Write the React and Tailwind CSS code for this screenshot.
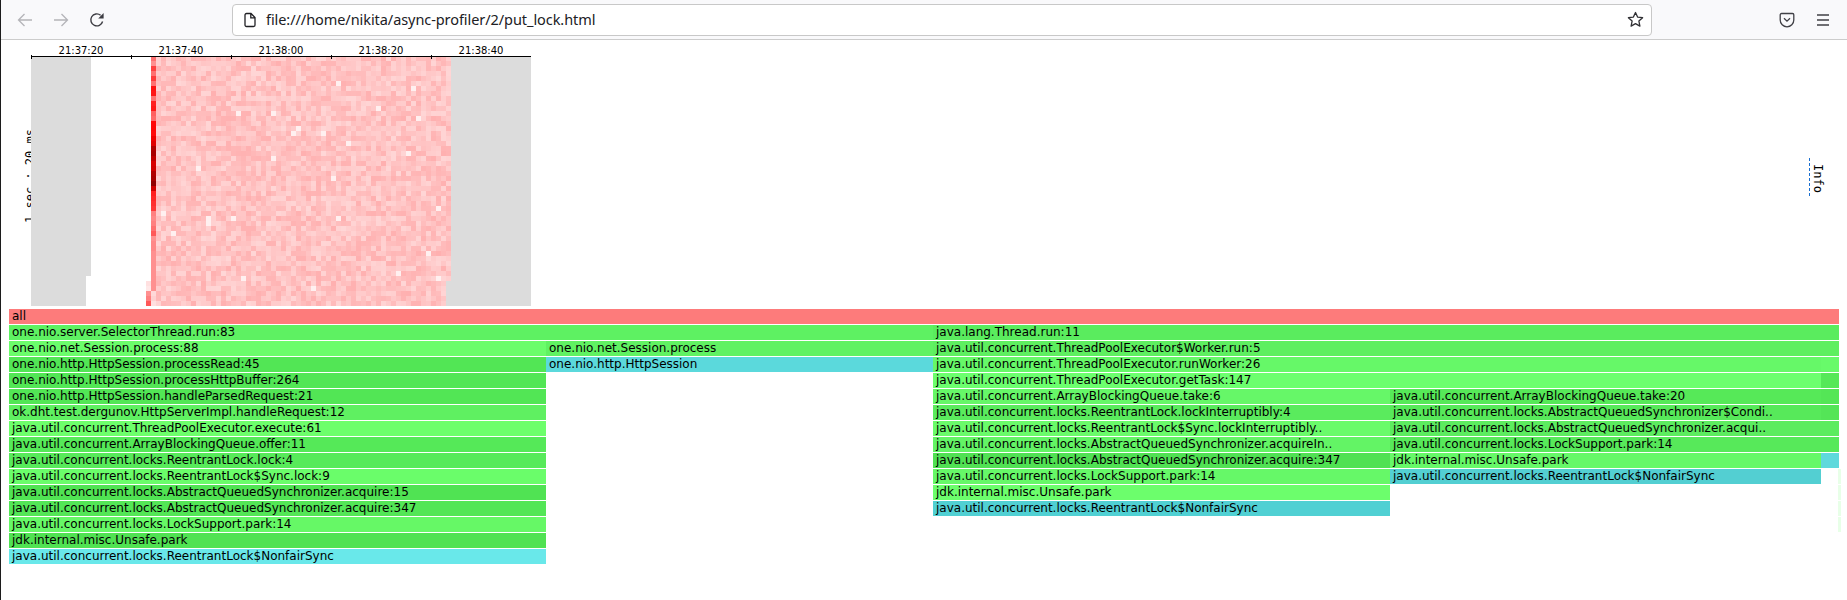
import React from 'react';

const mono = "font-['DejaVu_Sans_Mono',monospace]";

// first column of the heatmap, top to bottom
const hotColumn = [
  '#ff7070', '#ff9090', '#ff4040', '#ff7070', '#ff3a3a', '#ff7070', '#ff1010', '#ff1515', '#ff7070', '#ff2020',
  '#ff1818', '#ff6060', '#ff6a6a', '#ff0808', '#ff0606', '#ff0a0a', '#f00000', '#e00000', '#b00000', '#a80000',
  '#c00000', '#d80000', '#d00000', '#b00000', '#a80000', '#900000', '#d00000', '#ff2020', '#ff2828', '#ff3030',
  '#ff3838', '#ff8080', '#ff8888', '#ff8080', '#ff7070', '#ff5858', '#ff9090', '#ff8888', '#ff8888', '#ff9090',
  '#ff9090', '#ff9090', '#ff9090', '#ff9090', '#ff9090', '#ff9090', '#ff9090', '#ffd8d8', '#ffd0d0', '#ffe0e0',
];
const leadColumn = { 45: '#ffe0e0', 46: '#ffe8e8', 47: '#ff9090', 48: '#ff8080', 49: '#ff5858' };

function buildCells() {
  let seed = 4711;
  const next = () => {
    seed = (seed * 1103515245 + 12345) % 2147483648;
    return seed / 2147483648;
  };
  const cells = [];
  for (let r = 0; r < 50; r++) {
    for (let c = 0; c < 100; c++) {
      let fill = null;
      if (c < 11) fill = '#dcdcdc';
      else if (c === 11) fill = r < 44 ? '#dcdcdc' : null;
      else if (c === 23) fill = leadColumn[r] || null;
      else if (c === 24) fill = hotColumn[r];
      else if (c > 83 || (c === 83 && r >= 45)) fill = '#dcdcdc';
      else if (c > 24) {
        const n = next();
        let v = Math.round(176 + n * 38);
        if (n > 0.995) v = 240;
        fill = `rgb(255,${v},${v})`;
      }
      if (fill) cells.push(<rect key={r + '-' + c} x={c * 5} y={1 + r * 5} width="5" height="5" fill={fill} />);
    }
  }
  return cells;
}

const labels = ['21:37:20', '21:37:40', '21:38:00', '21:38:20', '21:38:40'];

const rows = [
  [['w-[1830px] bg-[#fd7b7b]', 'all']],
  [['w-[924px] bg-[#5ef162]', 'one.nio.server.SelectorThread.run:83'], ['w-[906px] bg-[#5aec5e]', 'java.lang.Thread.run:11']],
  [['w-[537px] bg-[#6bfd6b]', 'one.nio.net.Session.process:88'], ['w-[387px] bg-[#60f262]', 'one.nio.net.Session.process'], ['w-[906px] bg-[#5eef60]', 'java.util.concurrent.ThreadPoolExecutor$Worker.run:5']],
  [['w-[537px] bg-[#52e655]', 'one.nio.http.HttpSession.processRead:45'], ['w-[387px] bg-[#5bd9dc]', 'one.nio.http.HttpSession'], ['w-[888px] bg-[#66f868]', 'java.util.concurrent.ThreadPoolExecutor.runWorker:26'], ['w-[18px] bg-[#68fa6a]', '']],
  [['w-[537px] bg-[#52e655]', 'one.nio.http.HttpSession.processHttpBuffer:264'], ['w-[387px]', ''], ['w-[888px] bg-[#6cff6e]', 'java.util.concurrent.ThreadPoolExecutor.getTask:147'], ['w-[18px] bg-[#56e858]', '']],
  [['w-[537px] bg-[#52e655]', 'one.nio.http.HttpSession.handleParsedRequest:21'], ['w-[387px]', ''], ['w-[457px] bg-[#66f768]', 'java.util.concurrent.ArrayBlockingQueue.take:6'], ['w-[431px] bg-[#56e958]', 'java.util.concurrent.ArrayBlockingQueue.take:20'], ['w-[18px] bg-[#54e656]', '']],
  [['w-[537px] bg-[#5ff061]', 'ok.dht.test.dergunov.HttpServerImpl.handleRequest:12'], ['w-[387px]', ''], ['w-[457px] bg-[#5aeb5d]', 'java.util.concurrent.locks.ReentrantLock.lockInterruptibly:4'], ['w-[431px] bg-[#57e95a]', 'java.util.concurrent.locks.AbstractQueuedSynchronizer$Condi..'], ['w-[18px] bg-[#54e557]', '']],
  [['w-[537px] bg-[#6dff6b]', 'java.util.concurrent.ThreadPoolExecutor.execute:61'], ['w-[387px]', ''], ['w-[457px] bg-[#6afb6a]', 'java.util.concurrent.locks.ReentrantLock$Sync.lockInterruptibly..'], ['w-[449px] bg-[#5cec5f]', 'java.util.concurrent.locks.AbstractQueuedSynchronizer.acqui..']],
  [['w-[537px] bg-[#55e958]', 'java.util.concurrent.ArrayBlockingQueue.offer:11'], ['w-[387px]', ''], ['w-[457px] bg-[#63f465]', 'java.util.concurrent.locks.AbstractQueuedSynchronizer.acquireIn..'], ['w-[449px] bg-[#57e95a]', 'java.util.concurrent.locks.LockSupport.park:14']],
  [['w-[537px] bg-[#57ea5a]', 'java.util.concurrent.locks.ReentrantLock.lock:4'], ['w-[387px]', ''], ['w-[457px] bg-[#50e153]', 'java.util.concurrent.locks.AbstractQueuedSynchronizer.acquire:347'], ['w-[431px] bg-[#66f868]', 'jdk.internal.misc.Unsafe.park'], ['w-[18px] bg-[#5fd9dc]', '']],
  [['w-[537px] bg-[#6afd6a]', 'java.util.concurrent.locks.ReentrantLock$Sync.lock:9'], ['w-[387px]', ''], ['w-[457px] bg-[#66f868]', 'java.util.concurrent.locks.LockSupport.park:14'], ['w-[431px] bg-[#53cfd2]', 'java.util.concurrent.locks.ReentrantLock$NonfairSync'], ['w-[17px]', ''], ['w-[1px] bg-[#e8ffe8]', '']],
  [['w-[537px] bg-[#50e353]', 'java.util.concurrent.locks.AbstractQueuedSynchronizer.acquire:15'], ['w-[387px]', ''], ['w-[457px] bg-[#6cfe6c]', 'jdk.internal.misc.Unsafe.park'], ['w-[448px]', ''], ['w-[1px] bg-[#e8ffe8]', '']],
  [['w-[537px] bg-[#53e656]', 'java.util.concurrent.locks.AbstractQueuedSynchronizer.acquire:347'], ['w-[387px]', ''], ['w-[457px] bg-[#50d0d3]', 'java.util.concurrent.locks.ReentrantLock$NonfairSync'], ['w-[448px]', ''], ['w-[1px] bg-[#e8ffe8]', '']],
  [['w-[537px] bg-[#66f866]', 'java.util.concurrent.locks.LockSupport.park:14'], ['w-[1292px]', ''], ['w-[1px] bg-[#e8ffe8]', '']],
  [['w-[537px] bg-[#50e252]', 'jdk.internal.misc.Unsafe.park']],
  [['w-[537px] bg-[#69e8ea]', 'java.util.concurrent.locks.ReentrantLock$NonfairSync']],
];

const Toolbar = () => (
  <div className="flex items-center h-[40px] bg-[#f9f9fb] border-b border-[#cccccc]">
    <div className="flex items-center w-[231px] pl-[16px] gap-[20px]">
      <svg width="16" height="16" viewBox="0 0 16 16" fill="none" stroke="#b4b4b8" strokeWidth="1.3">
        <path d="M15 8H1.5M7.5 2 1.5 8l6 6" />
      </svg>
      <svg width="16" height="16" viewBox="0 0 16 16" fill="none" stroke="#b4b4b8" strokeWidth="1.3">
        <path d="M1 8h13.5M8.5 2l6 6-6 6" />
      </svg>
      <svg width="16" height="16" viewBox="0 0 16 16" fill="none" stroke="#3c3c42" strokeWidth="1.4">
        <path d="M13.6 9.5A6 6 0 1 1 11.6 3.2" />
        <path d="M14.6 1v5.4H9.2z" fill="#3c3c42" stroke="none" />
      </svg>
    </div>
    <div className="flex items-center w-[1420px] h-[32px] bg-white border border-[#c8c8c8] rounded-[4px] pl-[9px] pr-[7px]">
      <svg width="16" height="16" viewBox="0 0 16 16" fill="none" stroke="#202024" strokeWidth="1.3">
        <path d="M3 3a1.500 1.500 0 0 1 1.500-1.500H9L13 5.500V13a1.500 1.500 0 0 1-1.500 1.500h-7A1.500 1.500 0 0 1 3 13zM8.800 1.500V5.800H13" />
      </svg>
      <span className="ml-[8px] text-[14.5px] tracking-[-0.07px] text-[#202024] font-['Noto_Sans',sans-serif] whitespace-nowrap">
        file:///home/nikita/async-profiler/2/put_lock.html
      </span>
      <svg className="ml-auto" width="17" height="17" viewBox="0 0 17 17" fill="none" stroke="#303034" strokeWidth="1.3" strokeLinejoin="round">
        <path d="M8.500 1.500l2.100 4.600 5 .6-3.700 3.400 1 5-4.400-2.500-4.400 2.500 1-5L1.400 6.700l5-.6z" />
      </svg>
    </div>
    <div className="flex items-center pl-[127px] gap-[20px]">
      <svg width="16" height="16" viewBox="0 0 16 16" fill="none" stroke="#404046" strokeWidth="1.3">
        <path d="M2.500 1.500h11a1.300 1.300 0 0 1 1.300 1.300V8a6.800 6.800 0 0 1-13.600 0V2.800a1.300 1.300 0 0 1 1.300-1.300zM5 6.200l3 3 3-3" />
      </svg>
      <svg width="16" height="16" viewBox="0 0 16 16" fill="none" stroke="#404046" strokeWidth="1.3">
        <path d="M2 3h12M2 8h12M2 13h12" />
      </svg>
    </div>
  </div>
);

const Heatmap = () => (
  <div className="relative w-[500px]">
    <div className="flex h-[9px] items-start font-['DejaVu_Sans',sans-serif] text-[10px] leading-[10px] text-black">
      {labels.map((l) => (
        <div key={l} className="w-[100px] text-center">{l}</div>
      ))}
    </div>
    <svg width="500" height="251" shapeRendering="crispEdges" className="relative block">
      {buildCells()}
      <rect x="0" y="1" width="500" height="1" fill="#000" />
      {[0, 100, 200, 300, 400].map((x) => (
        <rect key={x} x={x} y="0" width="1" height="4" fill="#000" />
      ))}
    </svg>
  </div>
);

const App = () => {
  return (
    <div className="h-[600px] overflow-hidden bg-white border-l border-[#1c1c1c]">
      <Toolbar />
      <div className="flex items-center h-[260px] mt-[6px]">
        <div className="flex justify-end w-[30px]">
          <div className={`[writing-mode:vertical-rl] rotate-180 whitespace-nowrap -mr-[6px] text-[12px] leading-[14px] text-black ${mono}`}>
            1 sec : 20 ms
          </div>
        </div>
        <Heatmap />
        <div className="flex ml-auto mr-[23px] mt-[3px] h-[39px] gap-px">
          <div className="w-px h-full bg-[repeating-linear-gradient(to_bottom,#1a6fd0_0,#1a6fd0_3px,transparent_3px,transparent_5px)]"></div>
          <div className={`w-[13px] pt-[6px] pl-[1px] whitespace-nowrap [writing-mode:vertical-rl] text-[12px] leading-[13px] text-black ${mono}`}>
            Info
          </div>
        </div>
      </div>
      <div className="flex flex-col gap-px mt-[3px] pl-[8px] font-['DejaVu_Sans',sans-serif] text-[12px] leading-[15px] text-black">
        {rows.map((row, i) => (
          <div key={i} className="flex h-[15px]">
            {row.map(([cls, text], j) => (
              <div key={j} className={`${cls} shrink-0 overflow-hidden whitespace-nowrap pl-[3px]`}>{text}</div>
            ))}
          </div>
        ))}
      </div>
    </div>
  );
};

export default App;
